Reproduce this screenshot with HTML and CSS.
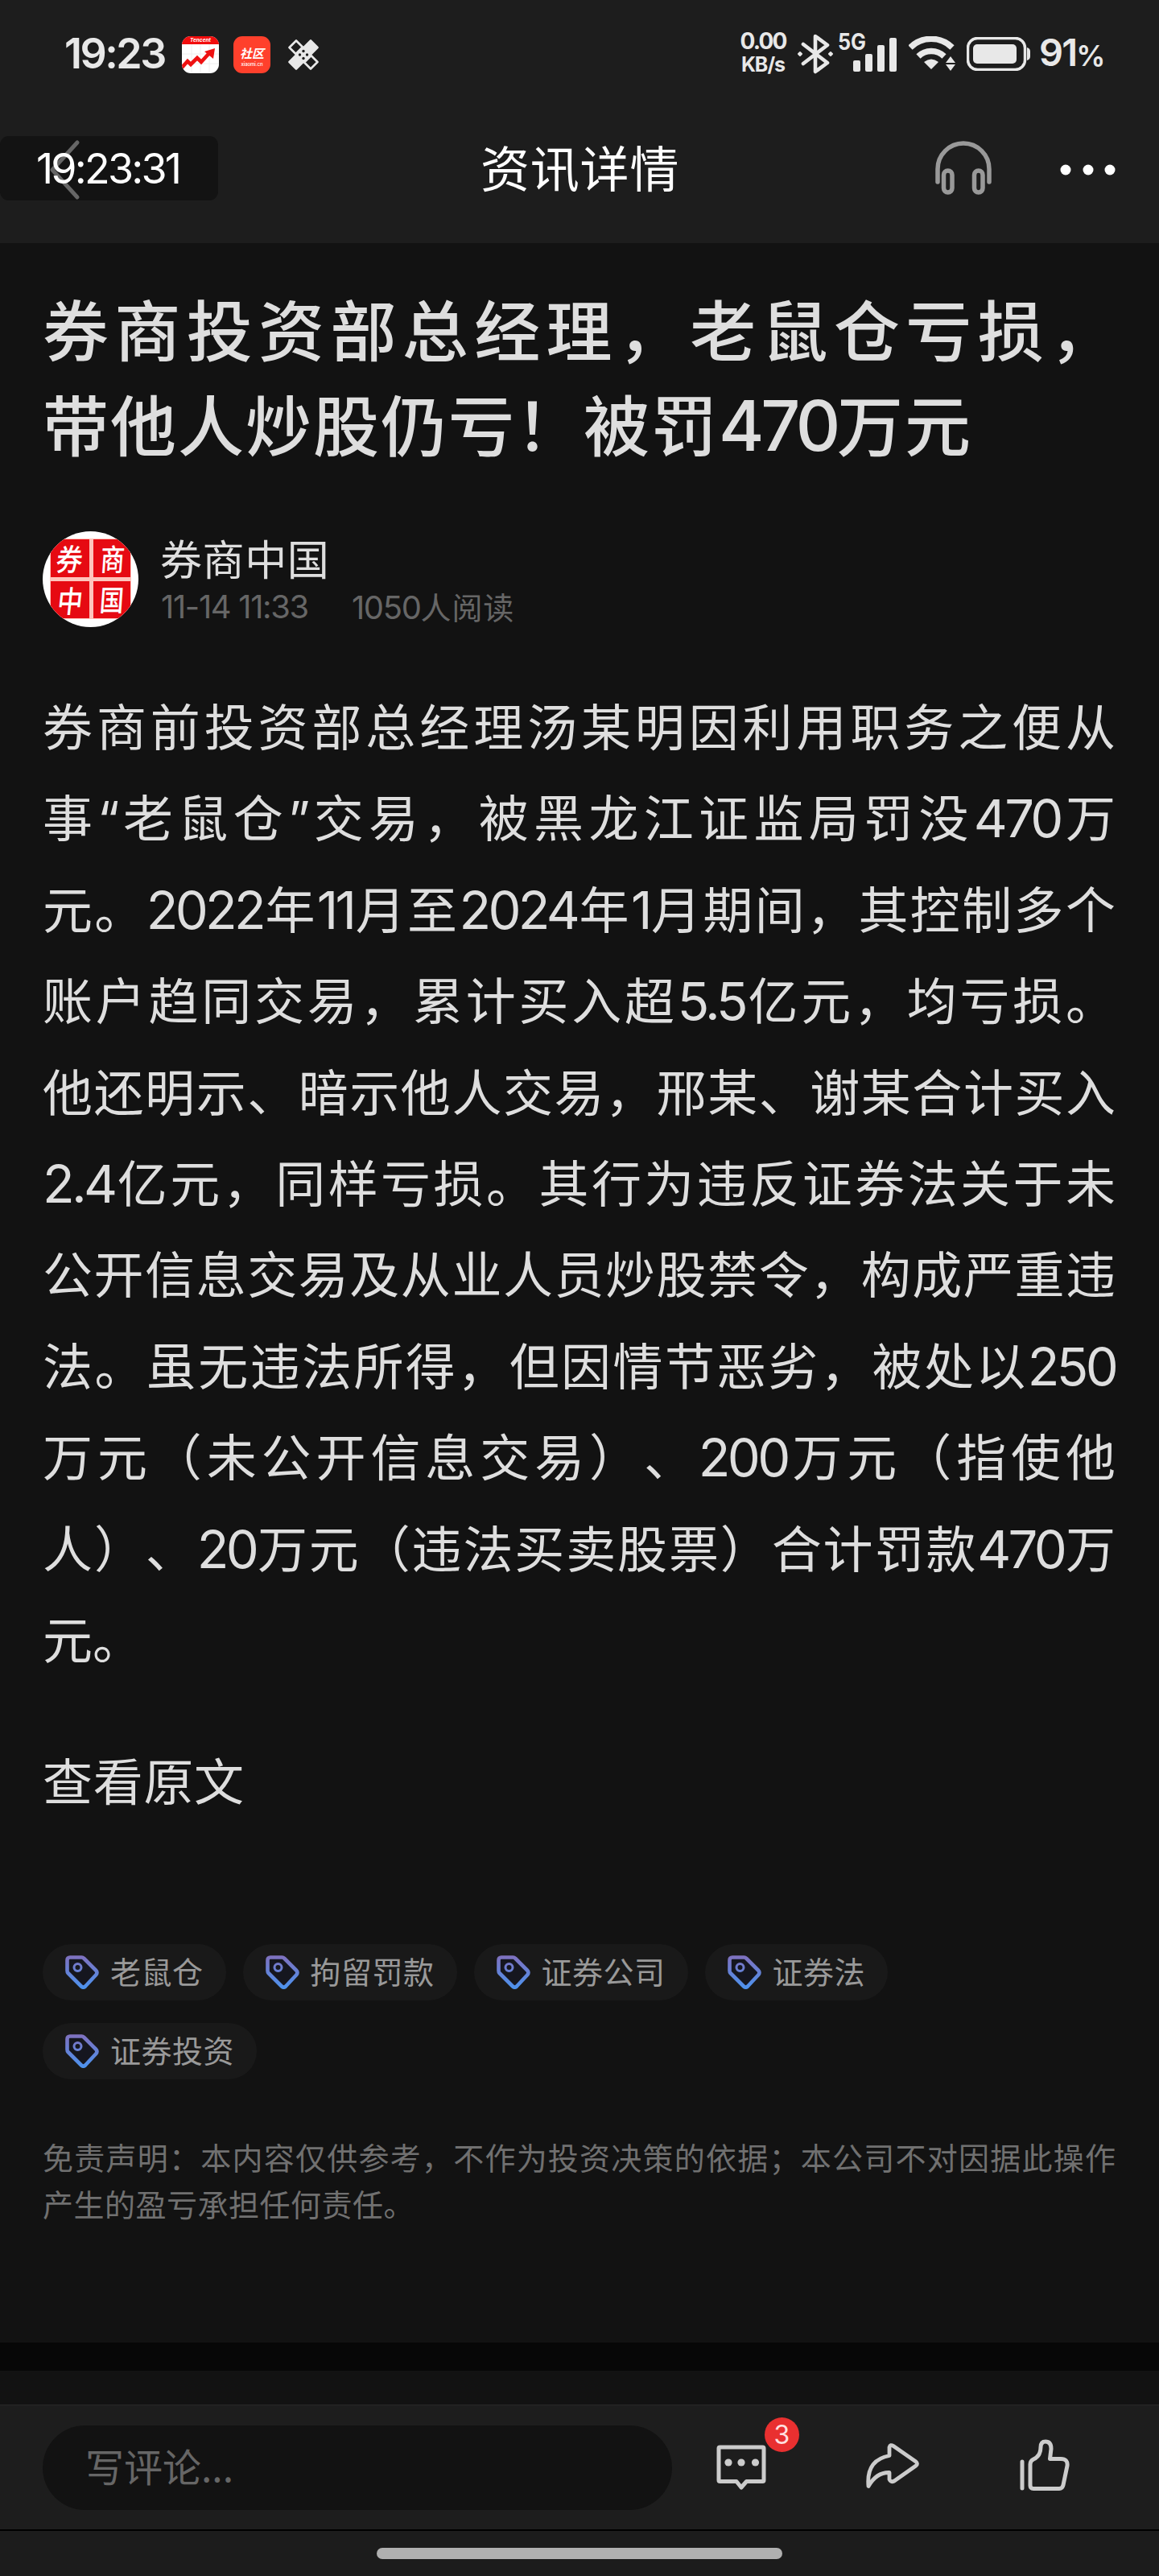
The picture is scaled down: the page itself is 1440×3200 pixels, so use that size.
FILE: index.html
```html
<!DOCTYPE html>
<html lang="zh-CN">
<head>
<meta charset="utf-8">
<title>资讯详情</title>
<link rel="stylesheet" href="styles.css">
</head>
<body>
<header class="top">
  <div class="status">
    <span class="status-time">19:23</span>
    <svg class="app-icon stock" width="46" height="46" viewBox="0 0 46 46">
      <defs><clipPath id="appClip"><rect width="46" height="46" rx="11"/></clipPath></defs>
      <g clip-path="url(#appClip)">
        <rect width="46" height="46" fill="#fff"/>
        <path d="M12 10v36M23 10v36M34 10v36M0 22h46M0 34h46" stroke="#eee" stroke-width="1"/>
        <rect width="46" height="10" fill="#f20d0d"/>
        <path d="M0 39l7-8 4 4 8-8 5 5 10-11" fill="none" stroke="#ee1111" stroke-width="4.6"/>
        <path d="M28 19l13-4-2 13z" fill="#ee1111"/>
      </g>
      <text x="23" y="7.4" text-anchor="middle" class="tencent">Tencent</text>
    </svg>
    <svg class="app-icon community" width="46" height="46" viewBox="0 0 46 46">
      <rect width="46" height="46" rx="11" fill="#ff402c"/>
      <text x="23" y="27" text-anchor="middle" class="community-name">社区</text>
      <text x="23" y="36.5" text-anchor="middle" textLength="27" class="community-url">xiaomi.cn</text>
    </svg>
    <svg class="patch" width="38" height="38" viewBox="0 0 38 38">
      <g stroke="#e8e8e8" stroke-width="2.6" stroke-linejoin="round" transform="translate(19 19)">
        <path d="M-9-17.5L-1-9.5-9.500-1-17.500-9z" fill="none"/>
        <path d="M9 17.500L1 9.500 9.500 1 17.500 9z" fill="none"/>
        <path d="M9-17.500L17.500-9-9 17.500-17.500 9z" fill="#e8e8e8"/>
      </g>
      <g fill="#1d1d1d"><circle cx="19" cy="14.500" r="1.700"/><circle cx="19" cy="23.500" r="1.700"/><circle cx="14.500" cy="19" r="1.700"/><circle cx="23.500" cy="19" r="1.700"/></g>
    </svg>
    <span class="net-speed"><span class="rate">0.00</span><span class="unit">KB/s</span></span>
    <svg class="bluetooth" width="46" height="50" viewBox="0 0 46 50" fill="none" stroke="#e8e8e8" stroke-width="4.600" stroke-linejoin="round" stroke-linecap="round">
      <path d="M8 13L38 36 23 47V3L38 14 8 37"/>
      <path d="M4 23l2 2-2 2-2-2zM42 23l2 2-2 2-2-2z" fill="#e8e8e8" stroke-width="2"/>
    </svg>
    <svg class="signal" width="74" height="60" viewBox="0 -10 74 60" fill="#e8e8e8">
      <text x="0" y="21" textLength="35" lengthAdjust="spacingAndGlyphs" class="network">5G</text>
      <rect x="19" y="34" width="9" height="14" rx="2"/><rect x="34" y="26" width="9" height="22" rx="2"/><rect x="49" y="15" width="9" height="33" rx="2"/><rect x="64" y="6" width="9" height="42" rx="2"/>
    </svg>
    <svg class="wifi" width="58" height="44" viewBox="0 0 58 44">
      <path d="M2 14a37 37 0 0 1 52 0M12 25a23 23 0 0 1 32 0" fill="none" stroke="#e8e8e8" stroke-width="7.500"/>
      <path d="M28 41l-9-9q9-7 18 0zM52 25l6 8H46zM52 43l6-8H46z" fill="#e8e8e8"/>
    </svg>
    <svg class="battery" width="80" height="42" viewBox="0 0 80 42">
      <rect x="1.500" y="1.500" width="71" height="39" rx="12" fill="none" stroke="#e8e8e8" stroke-width="3.500"/>
      <rect x="8" y="9" width="54" height="24" rx="5" fill="#e8e8e8"/><path d="M75 13q4 1 4 5v6q0 4-4 5z" fill="#e8e8e8"/>
    </svg>
    <span class="level">91<span class="percent">%</span></span>
  </div>
  <nav class="nav">
    <div class="clock">
      <svg class="back" width="40" height="80" viewBox="0 0 40 80"><path d="M35 8L4 42l31 34" fill="none" stroke="#666" stroke-width="5" stroke-linecap="round" stroke-linejoin="round"/></svg>
      <span class="clock-text">19:23:31</span>
    </div>
    <h2 class="nav-title">资讯详情</h2>
    <svg class="headphones" width="72" height="70" viewBox="0 0 72 70" fill="none" stroke="#999" stroke-width="5.500" stroke-linecap="round">
      <path d="M4 52V36a32 32 0 0 1 64 0v16"/><rect x="11.500" y="38" width="10.500" height="27" rx="5.200"/><rect x="49.500" y="38" width="10.500" height="27" rx="5.200"/>
    </svg>
    <svg class="more" width="72" height="14" viewBox="0 0 72 14" fill="#fff"><circle cx="8" cy="7" r="6.500"/><circle cx="36" cy="7" r="6.500"/><circle cx="63" cy="7" r="6.500"/></svg>
  </nav>
</header>
<main class="article">
  <h1 class="headline">
    <span class="line">券商投资部总经理，老鼠仓亏损，</span>
    <span class="line last">带他人炒股仍亏！被罚<b class="num">470</b>万元</span>
  </h1>
  <div class="author">
    <svg class="avatar" width="119" height="119" viewBox="0 0 119 119">
      <defs><clipPath id="round"><circle cx="59.500" cy="59.500" r="59.500"/></clipPath></defs>
      <g clip-path="url(#round)"><rect width="119" height="119" fill="#fff"/><rect x="9" y="9" width="101" height="100" fill="#ffc4bc"/>
      <path d="M10 10h48v47H10zM63 10h46v47H63zM10 62h48v46H10zM63 62h46v46H63z" fill="#e60a12"/></g>
      <g class="seal"><text transform="translate(15 49) skewX(-8) scale(1.1 1.25)">券</text><text transform="translate(71 49) skewX(-4) scale(1 1.25)">商</text><text transform="translate(17 101) skewX(-6) scale(1.05 1.25)">中</text><text transform="translate(70 99) skewX(-4) scale(1 1.2)">国</text></g>
    </svg>
    <div class="byline">
      <div class="name">券商中国</div>
      <div class="meta"><span class="num date">11-14 11:33</span><span class="reads"><span class="num">1050</span>人阅读</span></div>
    </div>
  </div>
  <p class="body">
    <span class="line">券商前投资部总经理汤某明因利用职务之便从</span>
    <span class="line">事<span class="quote">“</span>老鼠仓<span class="quote">”</span>交易，被黑龙江证监局罚没<span class="num">470</span>万</span>
    <span class="line">元。<span class="num">2022</span>年<span class="num">11</span>月至<span class="num">2024</span>年<span class="num">1</span>月期间，其控制多个</span>
    <span class="line">账户趋同交易，累计买入超<span class="num">5.5</span>亿元，均亏损。</span>
    <span class="line">他还明示、暗示他人交易，邢某、谢某合计买入</span>
    <span class="line"><span class="num">2.4</span>亿元，同样亏损。其行为违反证券法关于未</span>
    <span class="line">公开信息交易及从业人员炒股禁令，构成严重违</span>
    <span class="line">法。虽无违法所得，但因情节恶劣，被处以<span class="num">250</span></span>
    <span class="line">万元（未公开信息交易）、<span class="num">200</span>万元（指使他</span>
    <span class="line">人）、<span class="num">20</span>万元（违法买卖股票）合计罚款<span class="num">470</span>万</span>
    <span class="line last">元。</span>
  </p>
  <a class="source">查看原文</a>
  <svg width="0" height="0" class="defs"><defs>
    <linearGradient id="tagInk" x1="0" y1="0" x2="0" y2="42" gradientUnits="userSpaceOnUse"><stop offset="0" stop-color="#8070bd"/><stop offset="1" stop-color="#4b93ef"/></linearGradient>
    <symbol id="tag" viewBox="0 0 42 42"><path d="M6 2.500H20.500Q22 2.500 23.500 4L38 18.500Q41 21.500 38 24.500L25 38.500Q22.500 41 20 38.500L3.500 22Q2.500 21 2.500 19V6Q2.500 2.500 6 2.500Z" fill="#15161f" stroke="url(#tagInk)" stroke-width="4.600"/><circle cx="15.500" cy="15" r="4.500" fill="none" stroke="url(#tagInk)" stroke-width="3"/></symbol>
  </defs></svg>
  <div class="tags">
    <span class="tag"><svg class="tag-icon"><use href="#tag"/></svg>老鼠仓</span>
    <span class="tag"><svg class="tag-icon"><use href="#tag"/></svg>拘留罚款</span>
    <span class="tag"><svg class="tag-icon"><use href="#tag"/></svg>证券公司</span>
    <span class="tag"><svg class="tag-icon"><use href="#tag"/></svg>证券法</span>
    <span class="tag"><svg class="tag-icon"><use href="#tag"/></svg>证券投资</span>
  </div>
  <p class="disclaimer">
    <span class="line">免责声明：本内容仅供参考，不作为投资决策的依据；本公司不对因据此操作</span>
    <span class="line last">产生的盈亏承担任何责任。</span>
  </p>
</main>
<div class="divider"></div>
<div class="peek"></div>
<footer class="actions">
  <div class="comment-box">写评论...</div>
  <div class="comments">
    <svg width="64" height="58" viewBox="0 0 64 58"><path d="M4.500 4H57.500Q59 4 59 5.500V45Q59 46.500 57.500 46.500H37.500L31 54 25 46.500H4.500Q3 46.500 3 45V5.500Q3 4 4.500 4Z" fill="none" stroke="#ccc" stroke-width="5" stroke-linejoin="round"/><g fill="#ccc"><circle cx="15" cy="23" r="4.600"/><circle cx="31" cy="23" r="4.600"/><circle cx="48.500" cy="23" r="4.600"/></g></svg>
    <span class="badge">3</span>
  </div>
  <svg class="share" width="70" height="60" viewBox="0 0 70 60"><path d="M30 16.500V6Q31 2 35 4.500L63 24Q66 26.500 63 29L36 48Q32 50 30 46V37.500Q14 37 4 54.500Q1 22 30 16.500Z" fill="none" stroke="#ccc" stroke-width="4.800" stroke-linejoin="round"/></svg>
  <svg class="like" width="64" height="68" viewBox="0 0 64 68" fill="none" stroke="#ccc" stroke-width="5" stroke-linecap="round" stroke-linejoin="round"><path d="M4 29V62M14 32Q14 28 18 26Q27 22 27 11Q27 4 33 4Q40 4 40 13L38.500 25.500H52Q61 25.500 60 34L55 58Q54 62.500 50 62.500H18Q14 62.500 14 58.500Z"/></svg>
</footer>
<div class="gesture"><span class="handle"></span></div>
</body>
</html>
```

FILE: styles.css
```css
* { box-sizing: border-box; }
body {
  margin: 0;
  width: 1440px;
  height: 3200px;
  overflow: hidden;
  background: #121212;
  color: #dedede;
  font-family: "Noto Sans CJK SC", sans-serif;
  text-spacing-trim: space-all;
  display: flex;
  flex-direction: column;
}
svg { display: block; flex: none; }
h1, h2, p { margin: 0; font-weight: 400; }

.top { height: 302px; flex: none; background: #1d1d1d; }
.status {
  height: 120px;
  padding: 15px 0 0 80px;
  display: flex;
  align-items: center;
  color: #e8e8e8;
  font-family: Inter, sans-serif;
  white-space: nowrap;
}
.status > * { flex: none; }
.status-time { width: 146px; font-size: 52px; font-weight: 600; line-height: 52px; letter-spacing: -2.500px; margin-top: -2px; }
.community { margin-left: 18px; }
.patch { margin-left: 22px; }
.tencent { font: italic 700 6.500px Inter, sans-serif; fill: #fff; }
.community-name { font: italic 700 15px "Noto Sans CJK SC", sans-serif; fill: #fff; }
.community-url { font: 500 6px Inter, sans-serif; fill: #fff; }
.net-speed { width: 60px; margin-left: 522px; display: flex; flex-direction: column; align-items: center; font-weight: 700; margin-top: -5px; }
.rate { font-size: 28px; line-height: 30px; letter-spacing: -1.800px; }
.unit { font-size: 25px; line-height: 28px; letter-spacing: -1px; }
.bluetooth { margin-left: 12px; margin-top: -2px; }
.signal { margin-left: 5px; margin-top: -14px; }
.network { font: 700 28px Inter, sans-serif; }
.wifi { margin-left: 14px; margin-top: -2px; }
.battery { margin-left: 14px; margin-top: -2px; }
.level { margin-left: 10px; font-size: 47px; line-height: 50px; font-weight: 600; letter-spacing: -1.900px; margin-top: -1px; }
.percent { font-size: 36px; }

.nav { height: 182px; display: flex; align-items: center; padding-bottom: 4px; }
.clock { width: 271px; height: 80px; border-radius: 11px; background: #131313; position: relative; }
.back { position: absolute; left: 61px; top: 0; }
.clock-text {
  position: absolute; left: 45px; top: 1px;
  font: 400 52px/80px Inter, sans-serif; color: #fff; letter-spacing: -2.800px;
}
.nav-title { width: 260px; margin-left: 326px; margin-top: -4px; font-size: 61px; line-height: 80px; color: #fff; letter-spacing: .800px; }
.headphones { margin-left: 304px; }
.more { margin-left: 83px; margin-top: 4px; }

.article { padding: 0 54px; height: 2608px; flex: none; display: flex; flex-direction: column; }
.line { display: block; white-space: nowrap; text-align: justify; text-align-last: justify; }
.last { text-align-last: left; }
.num { font-family: Inter, sans-serif; font-size: 1.050em; line-height: 0; letter-spacing: -.057em; font-weight: inherit; }
.quote { font-family: Inter, sans-serif; line-height: 0; letter-spacing: -2px; }
.headline { padding-top: 46px; margin-left: -1px; font-size: 82px; line-height: 118px; font-weight: 500; }
.headline .last { letter-spacing: 2px; }
.headline .num { letter-spacing: -.050em; }

.author { margin-top: 76px; display: flex; gap: 28px; }
.avatar { margin-left: -1px; }
.seal { font: 500 30px "Noto Sans CJK SC", sans-serif; fill: #fff; }
.name { font-size: 52px; line-height: 66px; letter-spacing: .600px; margin-left: -1px; }
.meta { display: flex; gap: 54px; font-size: 38px; line-height: 54px; color: #666; letter-spacing: .900px; }
.meta .num { line-height: 56px; letter-spacing: -1.300px; }

.body { margin: 61px 0 0 -1px; font-size: 62px; line-height: 113.400px; }
.source { margin: 64px 0 0 -1px; font-size: 62px; line-height: 110px; letter-spacing: .700px; }
.defs { position: absolute; }
.tags { margin: 150px 0 0 -1px; display: flex; flex-wrap: wrap; gap: 28px 21px; }
.tag {
  height: 70px; padding: 0 28px 4px; border-radius: 35px; background: #191919; color: #999;
  display: flex; align-items: center; font-size: 38px; letter-spacing: .500px; line-height: 60px;
}
.tag-icon { width: 42px; height: 42px; margin: 3px 14px 0 0; }
.disclaimer { margin: 67px 0 0 -1px; font-size: 38px; line-height: 58px; color: #707070; }
.disclaimer .last { letter-spacing: .500px; }

.divider { height: 35px; flex: none; background: #070707; }
.peek { height: 42px; flex: none; background: #121212; }
.actions { height: 155px; flex: none; background: #1d1d1d; border-top: 1px solid #282828; padding: 25px 0 0 53px; display: flex; }
.comment-box { width: 782px; height: 105px; border-radius: 53px; background: #121212; color: #666; font-size: 48px; line-height: 98px; padding-left: 53px; }
.comments { position: relative; width: 64px; margin: 23px 0 0 55px; }
.badge {
  position: absolute; left: 60px; top: -33px; width: 43px; height: 43px; border-radius: 50%;
  background: #e93030; color: #ffe0e0; font: 400 32px/43px Inter, sans-serif; text-align: center;
}
.share { margin: 21px 0 0 121px; }
.like { margin: 16px 0 0 121px; }
.gesture { height: 58px; flex: none; background: #1c1c1c; border-top: 2px solid #000; padding-top: 21px; }
.handle { display: block; width: 504px; height: 14px; margin: 0 auto; border-radius: 7px; background: #b0b0b0; }
```
